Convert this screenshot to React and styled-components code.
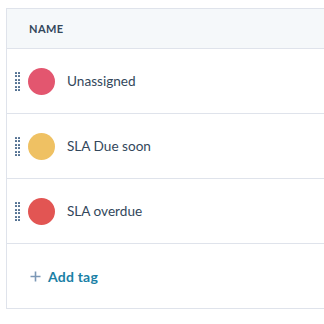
import React from 'react'
import styled, {createGlobalStyle} from 'styled-components'

const Global = createGlobalStyle`
  body {
    margin: 0;
    background: #fff;
    font-family: Lato, "Noto Sans", sans-serif;
  }
`

const Page = styled.div`
  padding: 8px 0 0 6px;
  width: 324px;
  height: 324px;
  box-sizing: border-box;
  overflow: hidden;
`

const Table = styled.div`
  width: 340px;
  border: 1px solid #dfe3eb;
  border-right: none;
`

const Head = styled.div`
  height: 39px;
  background: #f5f8fa;
  border-bottom: 1px solid #dfe3eb;
  display: flex;
  align-items: center;
  padding-left: 22px;
  font-size: 11px;
  font-weight: 700;
  letter-spacing: 0.4px;
  color: #33475b;
`

const Row = styled.div`
  height: 64px;
  border-bottom: 1px solid #dfe3eb;
  display: flex;
  align-items: center;
  padding-left: 8px;
`

const Handle = styled.div`
  display: grid;
  grid-template-columns: repeat(2, 2px);
  grid-auto-rows: 2px;
  column-gap: 1px;
  row-gap: 1.5px;
  margin-right: 8px;
  padding-top: 1px;

  span {
    background: #516f90;
    border-radius: 0.5px;
  }
`

const Dot = styled.div`
  width: 27px;
  height: 27px;
  border-radius: 50%;
  background: ${p => p.color};
  margin-right: 12px;
`

const Label = styled.div`
  font-size: 13.6px;
  color: #33475b;
  padding-bottom: 1px;
`

const Footer = styled.div`
  height: 64px;
  display: flex;
  align-items: center;
  padding-left: 23px;
  gap: 7px;
`

const AddLink = styled.span`
  font-size: 14px;
  font-weight: 700;
  color: #1a7fa6;
  letter-spacing: 0.2px;
`

const tags = [
  {name: 'Unassigned', color: '#e3566f'},
  {name: 'SLA Due soon', color: '#efc163'},
  {name: 'SLA overdue', color: '#e25553'},
]

const App = () => (
  <Page>
    <Global />
    <Table>
      <Head>NAME</Head>
      {tags.map(t => (
        <Row key={t.name}>
          <Handle>
            {Array.from({length: 12}).map((_, i) => <span key={i} />)}
          </Handle>
          <Dot color={t.color} />
          <Label>{t.name}</Label>
        </Row>
      ))}
      <Footer>
        <svg width="11" height="11" viewBox="0 0 11 11">
          <path d="M5.5 0.5v10M0.5 5.5h10" stroke="#7c98b6" strokeWidth="1.6" />
        </svg>
        <AddLink>Add tag</AddLink>
      </Footer>
    </Table>
  </Page>
)

export default App
